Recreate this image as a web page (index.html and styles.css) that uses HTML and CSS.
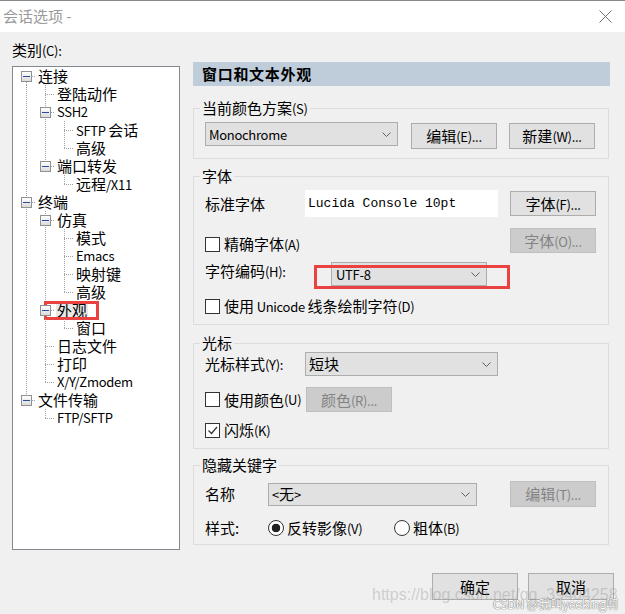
FILE: index.html
```html
<!DOCTYPE html>
<html>
  <head>
    <meta charset="utf-8">
    <title>会话选项</title>
    <link rel="stylesheet" href="styles.css">
  </head>

  <body>
    <!-- Window title bar -->
    <div class="titlebar">
      <span class="title">会话选项 -</span>
      <svg class="close" width="13" height="13" viewBox="0 0 13 13">
        <path d="M0.5 0.5 L12.5 12.5 M12.5 0.5 L0.5 12.5" stroke="#707070" stroke-width="1" fill="none"/>
      </svg>
    </div>

    <div class="main">
      <!-- Category tree -->
      <div class="left">
        <p class="cat-label">类别<span class="en">(C):</span></p>
        <div class="tree">
          <div class="row"><span class="node first"><span class="box"></span></span><span class="label">连接</span></div>
          <div class="row"><span class="guide line"></span><span class="node tee"></span><span class="label">登陆动作</span></div>
          <div class="row"><span class="guide line"></span><span class="node tee"><span class="box"></span></span><span class="label en">SSH2</span></div>
          <div class="row"><span class="guide line"></span><span class="guide line"></span><span class="node tee"></span><span class="label"><span class="en">SFTP </span>会话</span></div>
          <div class="row"><span class="guide line"></span><span class="guide line"></span><span class="node ell"></span><span class="label">高级</span></div>
          <div class="row"><span class="guide line"></span><span class="node ell"><span class="box"></span></span><span class="label">端口转发</span></div>
          <div class="row"><span class="guide line"></span><span class="guide"></span><span class="node ell"></span><span class="label">远程<span class="en">/X11</span></span></div>
          <div class="row"><span class="node tee"><span class="box"></span></span><span class="label">终端</span></div>
          <div class="row"><span class="guide line"></span><span class="node tee"><span class="box"></span></span><span class="label">仿真</span></div>
          <div class="row"><span class="guide line"></span><span class="guide line"></span><span class="node tee"></span><span class="label">模式</span></div>
          <div class="row"><span class="guide line"></span><span class="guide line"></span><span class="node tee"></span><span class="label en">Emacs</span></div>
          <div class="row"><span class="guide line"></span><span class="guide line"></span><span class="node tee"></span><span class="label">映射键</span></div>
          <div class="row"><span class="guide line"></span><span class="guide line"></span><span class="node ell"></span><span class="label">高级</span></div>
          <div class="row"><span class="guide line"></span><span class="node tee"><span class="box"></span></span><span class="label sel">外观</span></div>
          <div class="row"><span class="guide line"></span><span class="guide line"></span><span class="node ell"></span><span class="label">窗口</span></div>
          <div class="row"><span class="guide line"></span><span class="node tee"></span><span class="label">日志文件</span></div>
          <div class="row"><span class="guide line"></span><span class="node tee"></span><span class="label">打印</span></div>
          <div class="row"><span class="guide line"></span><span class="node ell"></span><span class="label en">X/Y/Zmodem</span></div>
          <div class="row"><span class="node ell"><span class="box"></span></span><span class="label">文件传输</span></div>
          <div class="row"><span class="guide"></span><span class="node ell"></span><span class="label en">FTP/SFTP</span></div>
        </div>
      </div>

      <!-- Settings page -->
      <div class="right">
        <div class="header">窗口和文本外观</div>

        <fieldset class="group g-scheme">
          <legend>当前颜色方案<span class="en">(S)</span></legend>
          <div class="body">
            <div class="frow r-scheme">
              <div class="combo w-scheme"><span class="en">Monochrome</span><svg width="9" height="5" viewBox="0 0 9 5"><path d="M0.5 0.5 L4.5 4.5 L8.5 0.5" stroke="#606060" fill="none"/></svg></div>
              <button class="btn b-edit">编辑<span class="en">(E)...</span></button>
              <button class="btn b-new">新建<span class="en">(W)...</span></button>
            </div>
          </div>
        </fieldset>

        <fieldset class="group g-font">
          <legend>字体</legend>
          <div class="body">
            <div class="frow r-std">
              <span class="fld-label w100">标准字体</span>
              <div class="fontbox">Lucida Console 10pt</div>
              <button class="btn push-right short">字体<span class="en">(F)...</span></button>
            </div>
            <div class="frow r-exact">
              <label class="check"><span class="cbox"></span>精确字体<span class="en">(A)</span></label>
              <button class="btn push-right short" disabled>字体<span class="en">(O)...</span></button>
            </div>
            <div class="frow r-enc">
              <span class="fld-label w126">字符编码<span class="en">(H):</span></span>
              <div class="combo w-enc"><span class="en">UTF-8</span><svg width="9" height="5" viewBox="0 0 9 5"><path d="M0.5 0.5 L4.5 4.5 L8.5 0.5" stroke="#606060" fill="none"/></svg><span class="mark"></span></div>
            </div>
            <div class="frow r-uni">
              <label class="check"><span class="cbox"></span>使用<span class="en">&nbsp;Unicode&nbsp;</span>线条绘制字符<span class="en">(D)</span></label>
            </div>
          </div>
        </fieldset>

        <fieldset class="group g-cursor">
          <legend>光标</legend>
          <div class="body">
            <div class="frow r-style">
              <span class="fld-label w100">光标样式<span class="en">(Y):</span></span>
              <div class="combo w-scheme"><span>短块</span><svg width="9" height="5" viewBox="0 0 9 5"><path d="M0.5 0.5 L4.5 4.5 L8.5 0.5" stroke="#606060" fill="none"/></svg></div>
            </div>
            <div class="frow r-color">
              <label class="check cut"><span class="cbox"></span>使用颜色<span class="en">(U)</span></label>
              <button class="btn short" disabled>颜色<span class="en">(R)...</span></button>
            </div>
            <div class="frow r-blink">
              <label class="check"><span class="cbox"><svg width="13" height="13" viewBox="0 0 13 13"><path d="M2.5 6.5 L5.5 9.5 L11 3" stroke="#333" stroke-width="1.2" fill="none"/></svg></span>闪烁<span class="en">(K)</span></label>
            </div>
          </div>
        </fieldset>

        <fieldset class="group g-hide">
          <legend>隐藏关键字</legend>
          <div class="body">
            <div class="frow r-name">
              <span class="fld-label w63">名称</span>
              <div class="combo w-name"><span><span class="en">&lt;</span>无<span class="en">&gt;</span></span><svg width="9" height="5" viewBox="0 0 9 5"><path d="M0.5 0.5 L4.5 4.5 L8.5 0.5" stroke="#606060" fill="none"/></svg></div>
              <button class="btn push-right" disabled>编辑<span class="en">(T)...</span></button>
            </div>
            <div class="frow r-radio">
              <span class="fld-label w63">样式:</span>
              <label class="radio w126"><span class="rbox on"></span>反转影像<span class="en">(V)</span></label>
              <label class="radio"><span class="rbox"></span>粗体<span class="en">(B)</span></label>
            </div>
          </div>
        </fieldset>
      </div>
    </div>

    <!-- Dialog buttons -->
    <div class="footer">
      <button class="btn tall">确定</button>
      <button class="btn tall">取消</button>
    </div>

    <div class="wm-url">https://blog.csdn.net/qq_39404258</div>
    <div class="wm-name">CSDN @我叫yeeking啊</div>
  </body>
</html>
```

FILE: styles.css
```css
/* Session options dialog */
*{
  box-sizing: border-box;
}

body{
  margin: 0;
  width: 625px;
  height: 614px;
  overflow: hidden;
  position: relative;
  background-color: #f0f0f0;
  color: #000;
  font-family: "Noto Sans CJK SC", sans-serif;
  font-size: 15px;
}

/* latin runs are narrower than the CJK glyphs in the dialog font */
.en{
  font-size: 13px;
  line-height: 1;
  letter-spacing: -0.3px;
}

.titlebar{
  height: 32px;
  border-top: 1px solid #8a8a8a;
  background-color: #fff;
  display: flex;
  align-items: center;
  justify-content: space-between;
  padding: 0 13px 0 3px;
}

.title{
  color: #9a9a9a;
  line-height: 18px;
  margin-top: -1px;
}

.main{
  display: flex;
  gap: 13px;
  padding-left: 12px;
}

/* Tree on the left */
.left{
  width: 168px;
}

.cat-label{
  margin: 9px 0 7px;
  line-height: 18px;
}

.tree{
  height: 484px;
  border: 1px solid #828790;
  background-color: #fff;
}

.row{
  display: flex;
  height: 18px;
  line-height: 18px;
  white-space: nowrap;
}

.row .label.en{
  line-height: 18px;
}

.guide,
.node{
  position: relative;
  width: 19px;
  flex: none;
}

.guide.line::before,
.node::before{
  content: "";
  position: absolute;
  left: 13px;
  top: 0;
  bottom: 0;
  width: 1px;
  background: repeating-linear-gradient(to bottom, #a0a0a0 0 1px, transparent 1px 2px);
}

.node.ell::before{
  bottom: 9px;
}

.node.first::before{
  top: 9px;
}

.node::after{
  content: "";
  position: absolute;
  left: 13px;
  top: 9px;
  width: 10px;
  height: 1px;
  background: repeating-linear-gradient(to right, #a0a0a0 0 1px, transparent 1px 2px);
}

.box{
  position: absolute;
  left: 8px;
  top: 4px;
  width: 11px;
  height: 11px;
  border: 1px solid #919191;
  background: linear-gradient(#ffffff, #dadada);
  z-index: 1;
}

.box::after{
  /* minus sign of the expanded node */
  content: "";
  position: absolute;
  left: 1px;
  top: 4px;
  width: 7px;
  height: 1px;
  background-color: #2b4c9b;
}

.label{
  margin-left: 5px;
  padding: 0 1px;
}

.label.sel{
  position: relative;
  background-color: #e8e8e8;
}

.label.sel::after{
  content: "";
  position: absolute;
  left: -12px;
  right: -11px;
  top: 0;
  bottom: -1px;
  border: 3px solid #ea4141;
}

/* Settings on the right */
.right{
  width: 417px;
  margin-top: 30px;
}

.header{
  height: 24px;
  line-height: 24px;
  padding-left: 9px;
  background-color: #bfcddb;
  font-weight: bold;
  letter-spacing: 0.7px;
}

.group{
  margin: 8px 1px 0 0;
  padding: 0;
  border: 1px solid #dcdcdc;
  min-width: 0;
}

.group legend{
  margin-left: 6px;
  padding: 0 2px;
  line-height: 18px;
}

.g-scheme{ margin-top: 13px; }
.g-font{ margin-top: 8px; }
.g-cursor{ margin-top: 9px; }
.g-hide{ margin-top: 7px; }

.g-scheme .body{ padding: 5px 12px 9px 11px; }
.g-font .body{ padding: 5px 12px 8px 11px; }
.g-cursor .body{ padding: 0 12px 9px 11px; }
.g-hide .body{ padding: 7px 12px 7px 11px; }

.frow{
  display: flex;
  align-items: center;
  white-space: nowrap;
}

.r-scheme{ height: 27px; align-items: flex-start; }
.r-std{ height: 27px; }
.r-exact{ height: 26px; margin-top: 10px; align-items: flex-end; }
.r-enc{ height: 25px; margin-top: 9px; align-items: flex-start; }
.r-uni{ height: 20px; margin-top: 9px; }
.r-style{ height: 24px; }
.r-color{ height: 25px; margin-top: 11px; }
.r-blink{ height: 18px; margin-top: 9px; }
.r-name{ height: 26px; }
.r-radio{ height: 18px; margin-top: 12px; }

.fld-label{
  flex: none;
  line-height: 18px;
}

.w63{ width: 63px; }
.w100{ width: 100px; }
.w126{ width: 126px; }

.combo{
  position: relative;
  flex: none;
  display: flex;
  align-items: center;
  justify-content: space-between;
  height: 24px;
  padding: 0 6px 0 3px;
  border: 1px solid #adadad;
  background-color: #e1e1e1;
  line-height: 18px;
}

.w-scheme{ width: 193px; }
.w-enc{ width: 156px; padding-left: 4px; }
.w-name{ width: 209px; height: 23px; }

.mark{
  /* red annotation frame around the encoding box */
  position: absolute;
  left: -18px;
  right: -24px;
  top: 2px;
  bottom: -4px;
  border: 3px solid #ea4141;
}

.fontbox{
  flex: none;
  width: 193px;
  height: 27px;
  line-height: 27px;
  padding-left: 3px;
  background-color: #fff;
  font-family: "Liberation Mono", monospace;
  font-size: 13px;
}

.btn{
  flex: none;
  width: 86px;
  height: 26px;
  padding: 0;
  border: 1px solid #adadad;
  background-color: #e1e1e1;
  color: #000;
  font-family: inherit;
  font-size: 15px;
  line-height: 18px;
}

.btn:disabled{
  background-color: #cccccc;
  border-color: #bfbfbf;
  color: #838383;
}

.btn.short{ height: 25px; }
.btn.tall{ height: 27px; }

.b-edit{ margin: 1px 0 0 13px; }
.b-new{ margin: 1px 0 0 12px; }

.push-right{
  margin-left: auto;
}

.check,
.radio{
  display: flex;
  align-items: center;
  line-height: 18px;
}

.check.cut{
  width: 101px;
  overflow: hidden;
}

.cbox{
  flex: none;
  width: 15px;
  height: 15px;
  margin-right: 4px;
  border: 1px solid #333;
  background-color: #fff;
}

.cbox svg{
  display: block;
}

.rbox{
  flex: none;
  width: 16px;
  height: 16px;
  margin-right: 3px;
  border: 1px solid #333;
  border-radius: 50%;
  background-color: #fff;
}

.rbox.on{
  background: radial-gradient(circle, #222 0 4px, #fff 4.6px);
}

.footer{
  display: flex;
  justify-content: flex-end;
  gap: 10px;
  margin-top: 23px;
  padding-right: 11px;
}

/* blog watermark drawn over the dialog */
.wm-url{
  position: absolute;
  left: 372px;
  top: 585px;
  font-family: "Liberation Sans", sans-serif;
  font-size: 16px;
  line-height: 20px;
  color: rgba(150, 150, 150, 0.4);
  white-space: nowrap;
}

.wm-name{
  position: absolute;
  right: 7px;
  top: 596px;
  font-size: 12px;
  line-height: 15px;
  color: #fff;
  text-shadow: 0 0 1px #666, 0 0 1px #666;
  white-space: nowrap;
}
```
